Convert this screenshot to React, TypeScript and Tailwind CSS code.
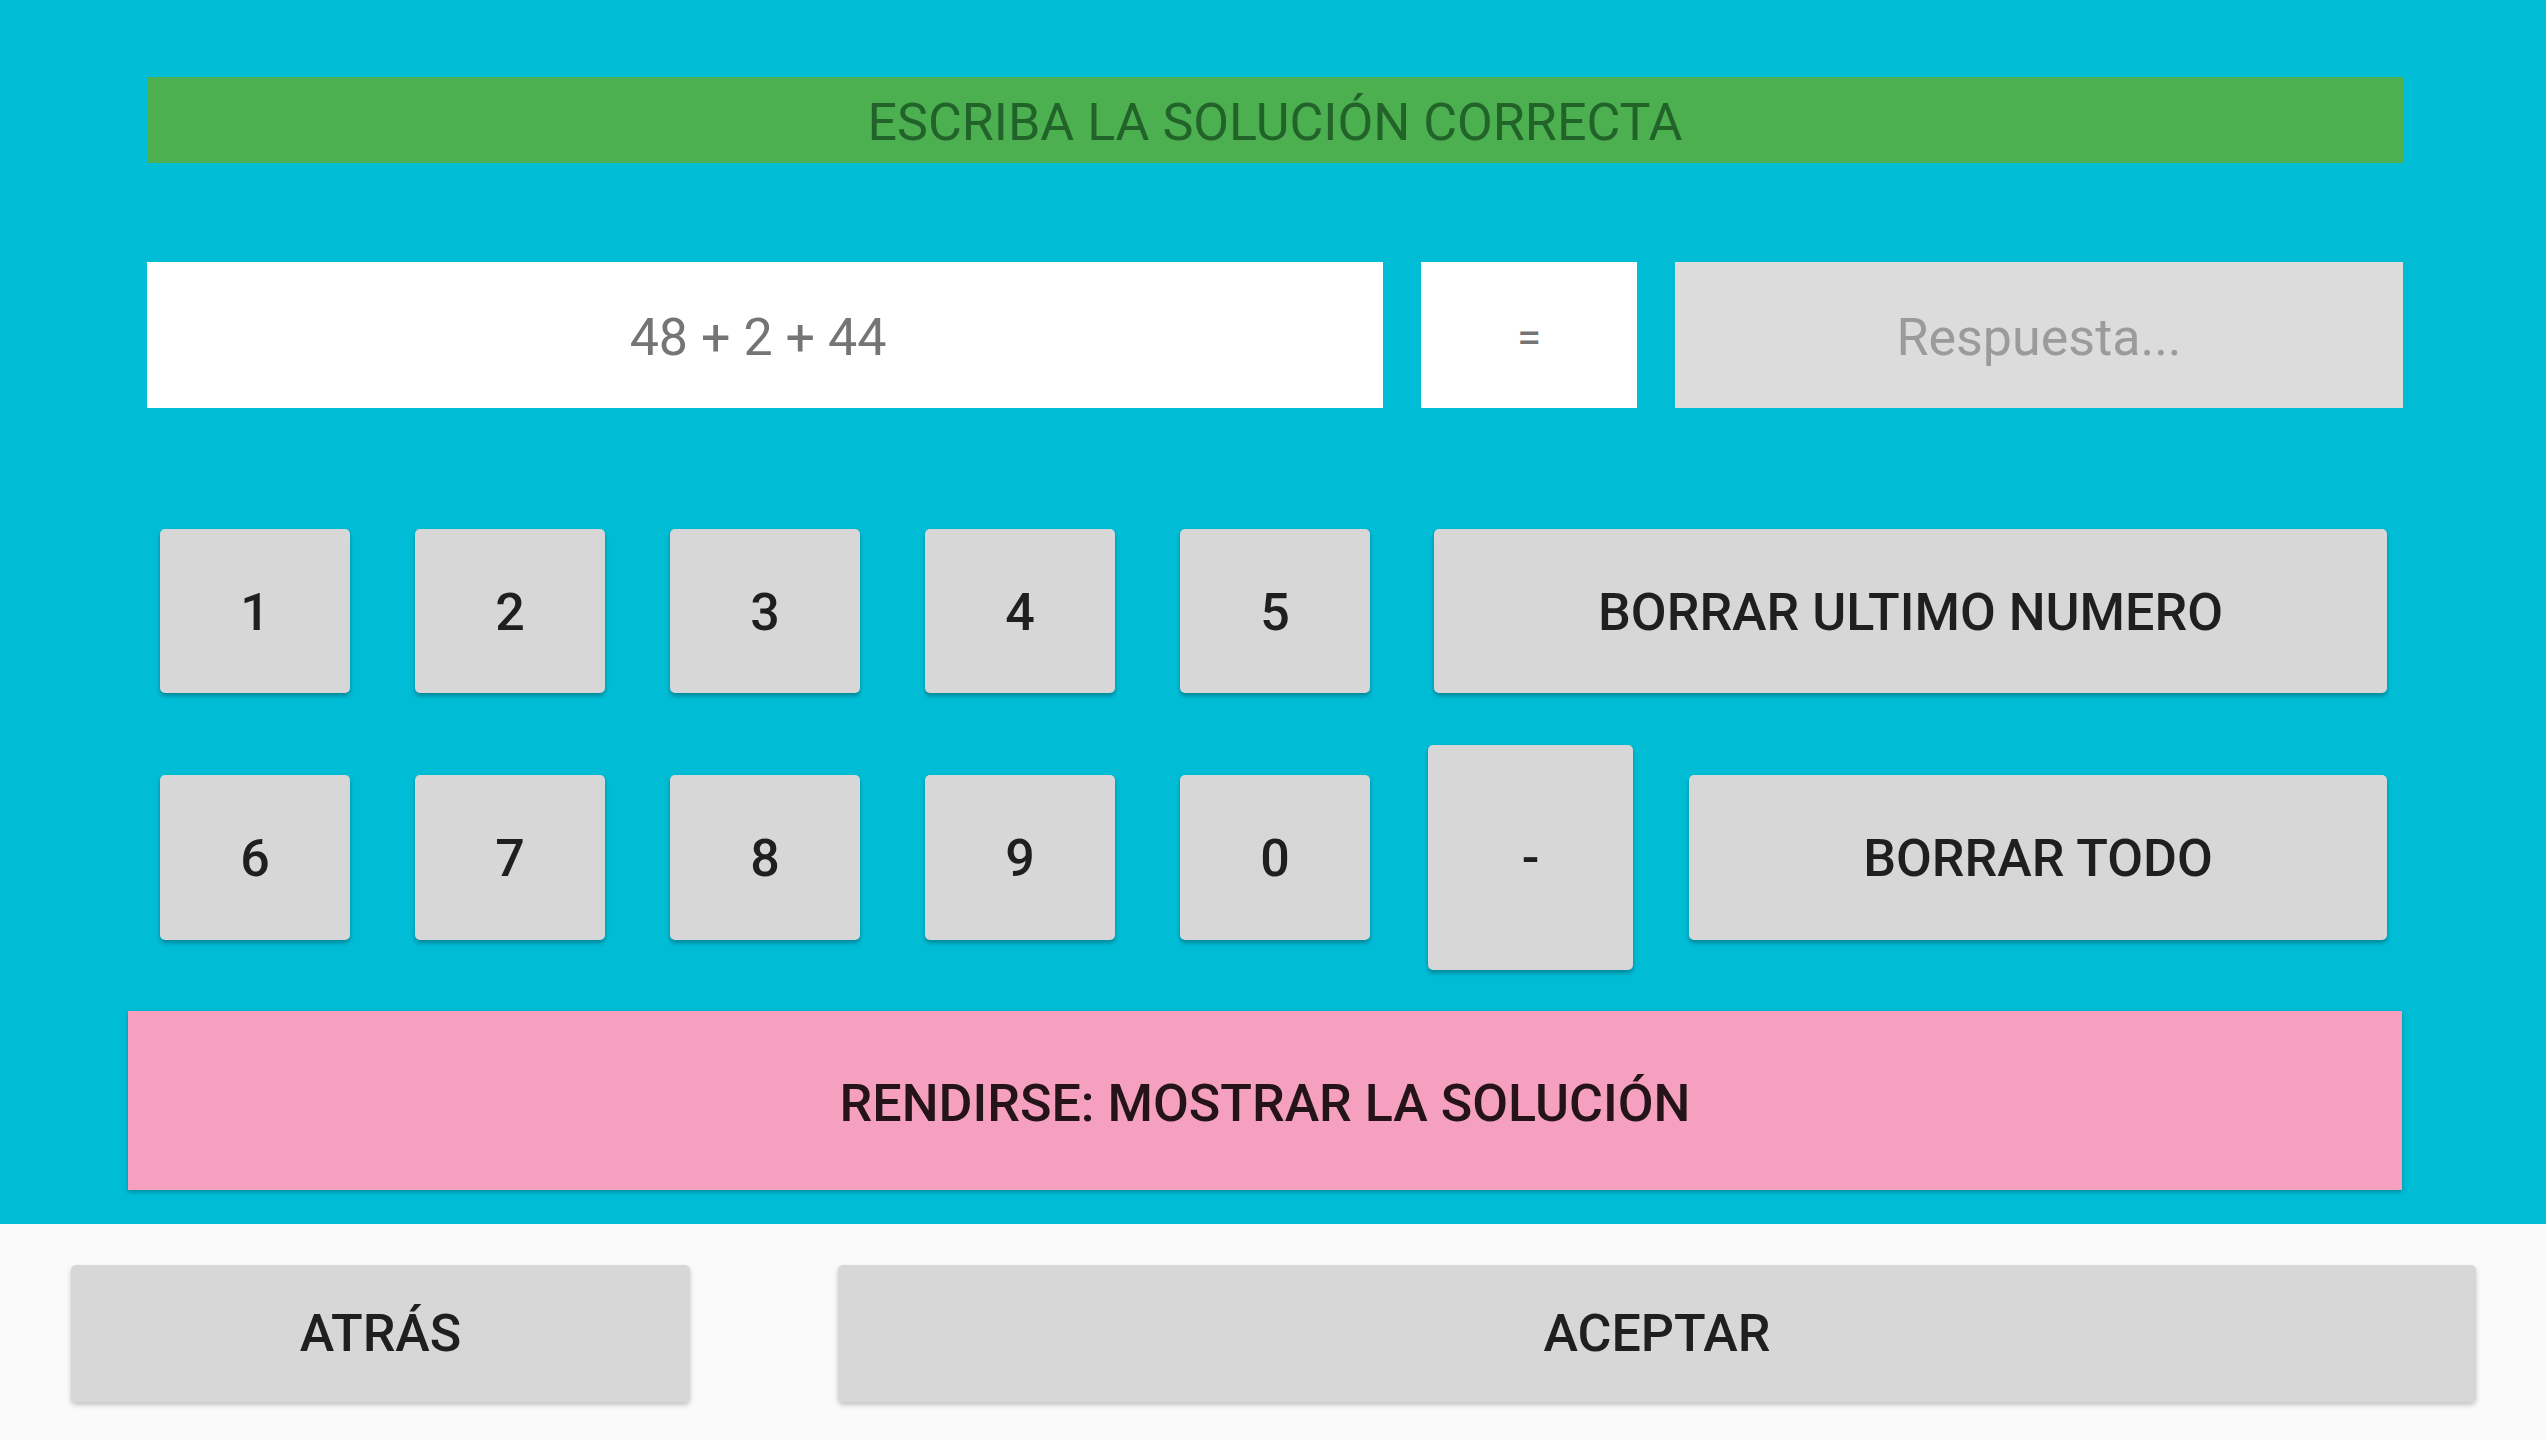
import React, { useState } from "react";

const keyClass =
    "flex items-center justify-center bg-[#d7d7d7] rounded-[5px] shadow-[0_3px_4px_rgba(0,0,0,0.28)] text-[#1f1f1f] font-medium text-[52px] leading-none";

const Key = ({ label, className = "", onClick }: { label: string; className?: string; onClick?: () => void }) => (
    <button onClick={onClick} className={`${keyClass} ${className}`}>
        {label}
    </button>
);

const App = () => {
    const [answer, setAnswer] = useState("");
    const press = (d: string) => setAnswer(answer + d);

    return (
        <div className="w-[2546px] h-[1440px] flex flex-col font-['Roboto',sans-serif] overflow-hidden">
            {/* Exercise area */}
            <div className="h-[1224px] bg-[#00bcd5] flex flex-col">
                <div className="mt-[77px] ml-[147px] mr-[143px] h-[86px] pt-[6px] bg-[#4caf50] flex items-center justify-center">
                    <span className="text-[52px] leading-none text-[#22632a]">ESCRIBA LA SOLUCIÓN CORRECTA</span>
                </div>

                {/* Operation + answer */}
                <div className="mt-[99px] ml-[147px] mr-[143px] h-[146px] flex gap-[38px]">
                    <div className="w-[1236px] pt-[6px] pr-[14px] bg-white flex items-center justify-center text-[52px] leading-none text-[#757575]">
                        48 + 2 + 44
                    </div>
                    <div className="w-[216px] pt-[6px] bg-white flex items-center justify-center text-[44px] leading-none text-[#757575]">
                        =
                    </div>
                    <div className="flex-1 pt-[6px] bg-[#dcdcdc] flex items-center justify-center text-[52px] leading-none text-[#9b9b9b]">
                        {answer || "Respuesta..."}
                    </div>
                </div>

                {/* Keypad row 1 */}
                <div className="mt-[121px] ml-[160px] h-[164px] flex gap-[65px]">
                    {["1", "2", "3", "4", "5"].map((d) => (
                        <Key key={d} label={d} className="w-[190px] pt-[3px]" onClick={() => press(d)} />
                    ))}
                    <Key label="BORRAR ULTIMO NUMERO" className="w-[953px] ml-[-1px] pt-[3px]" onClick={() => setAnswer(answer.slice(0, -1))} />
                </div>

                {/* Keypad row 2 */}
                <div className="mt-[52px] ml-[160px] h-[225px] flex items-center">
                    <div className="flex gap-[65px]">
                        {["6", "7", "8", "9", "0"].map((d) => (
                            <Key key={d} label={d} className="w-[190px] h-[165px] pt-[3px]" onClick={() => press(d)} />
                        ))}
                    </div>
                    <Key label="-" className="ml-[58px] w-[205px] h-[225px]" onClick={() => press("-")} />
                    <Key label="BORRAR TODO" className="ml-[56px] w-[698px] h-[165px] pt-[3px]" onClick={() => setAnswer("")} />
                </div>

                <button className="mt-[41px] ml-[128px] w-[2274px] h-[179px] pt-[6px] bg-[#f5a0bf] shadow-[0_2px_4px_rgba(0,0,0,0.25)] flex items-center justify-center text-[52px] font-medium leading-none text-[#24141a]">
                    RENDIRSE: MOSTRAR LA SOLUCIÓN
                </button>
            </div>

            {/* Bottom navigation */}
            <div className="flex-1 bg-[#fafafa] flex items-start pt-[41px] pl-[71px]">
                <button className="w-[619px] h-[137px] bg-[#d7d7d7] rounded-[5px] shadow-[0_3px_5px_rgba(0,0,0,0.22)] flex items-center justify-center text-[52px] font-medium leading-none text-[#1f1f1f]">
                    ATRÁS
                </button>
                <button className="ml-[148px] w-[1638px] h-[137px] bg-[#d7d7d7] rounded-[5px] shadow-[0_3px_5px_rgba(0,0,0,0.22)] flex items-center justify-center text-[52px] font-medium leading-none text-[#1f1f1f]">
                    ACEPTAR
                </button>
            </div>
        </div>
    );
};

export default App;
